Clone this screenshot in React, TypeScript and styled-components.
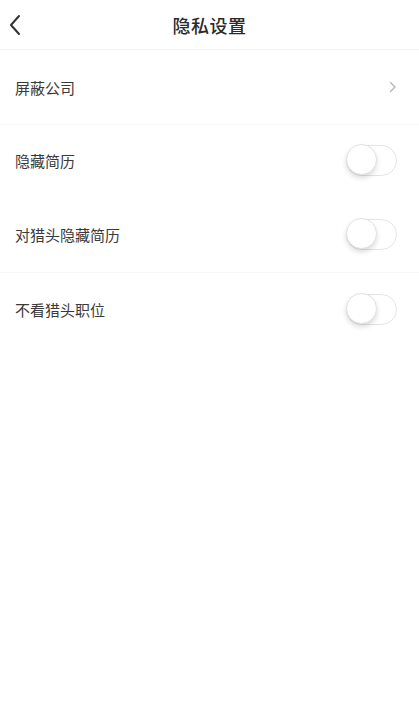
import React, { useState } from "react";
import styled, { createGlobalStyle } from "styled-components";

const GlobalStyle = createGlobalStyle`
  html, body {
    margin: 0;
    padding: 0;
    background: #ffffff;
  }
  body {
    font-family: "Noto Sans CJK SC", "Noto Sans", sans-serif;
    color: #333;
  }
`;

const Page = styled.div`
  width: 419px;
  min-height: 720px;
  background: #fff;
  display: flex;
  flex-direction: column;
`;

const Header = styled.header`
  height: 49px;
  display: grid;
  grid-template-columns: 48px 1fr 48px;
  align-items: center;
  border-bottom: 1px solid #f3f3f3;
`;

const BackButton = styled.button`
  border: 0;
  background: none;
  padding: 0 0 0 8px;
  height: 100%;
  display: flex;
  align-items: center;
  cursor: pointer;
`;

const Title = styled.h1`
  margin: 0;
  text-align: center;
  font-size: 18px;
  font-weight: 500;
  color: #2a2a2a;
  letter-spacing: 0.5px;
`;

const List = styled.div`
  display: flex;
  flex-direction: column;
`;

const Row = styled.div<{ $divider?: boolean; $height?: number }>`
  height: ${(p) => p.$height ?? 74}px;
  padding: 0 22px 0 15px;
  display: flex;
  align-items: center;
  justify-content: space-between;
  border-bottom: 1px solid ${(p) => (p.$divider ? "#f7f7f7" : "transparent")};
`;

const Label = styled.span`
  font-size: 15px;
  color: #3a3a3a;
`;

const Track = styled.button<{ $on: boolean }>`
  position: relative;
  width: 51px;
  height: 31px;
  padding: 0;
  border-radius: 16px;
  border: 1.5px solid #e4e4e4;
  background: ${(p) => (p.$on ? "#4cd964" : "#fff")};
  cursor: pointer;
  box-sizing: border-box;
`;

const Knob = styled.span<{ $on: boolean }>`
  position: absolute;
  top: -1.5px;
  left: ${(p) => (p.$on ? "20px" : "-1.5px")};
  width: 31px;
  height: 31px;
  border-radius: 50%;
  background: #fff;
  border: 1px solid #e2e2e2;
  box-sizing: border-box;
  box-shadow: 0 3px 5px rgba(0, 0, 0, 0.14);
`;

const Chevron = () => (
  <svg width="8" height="12" viewBox="0 0 8 12" aria-hidden>
    <path d="M1.5 1.5 L6 6 L1.5 10.5" fill="none" stroke="#b5b5b5" strokeWidth="1.4" strokeLinecap="round" strokeLinejoin="round" />
  </svg>
);

const BackIcon = () => (
  <svg width="14" height="22" viewBox="0 0 14 22" aria-hidden>
    <path d="M11 2 L3 11 L11 20" fill="none" stroke="#333" strokeWidth="2" strokeLinecap="round" strokeLinejoin="round" />
  </svg>
);

function Switch({ initial = false }: { initial?: boolean }) {
  const [on, setOn] = useState(initial);
  return (
    <Track $on={on} onClick={() => setOn(!on)} aria-pressed={on}>
      <Knob $on={on} />
    </Track>
  );
}

export default function App() {
  return (
    <Page>
      <GlobalStyle />
      <Header>
        <BackButton aria-label="返回">
          <BackIcon />
        </BackButton>
        <Title>隐私设置</Title>
        <span />
      </Header>
      <List>
        <Row $divider $height={74}>
          <Label>屏蔽公司</Label>
          <Chevron />
        </Row>
        <Row $height={70}>
          <Label>隐藏简历</Label>
          <Switch />
        </Row>
        <Row $divider $height={76}>
          <Label>对猎头隐藏简历</Label>
          <Switch />
        </Row>
        <Row $height={72}>
          <Label>不看猎头职位</Label>
          <Switch />
        </Row>
      </List>
    </Page>
  );
}
